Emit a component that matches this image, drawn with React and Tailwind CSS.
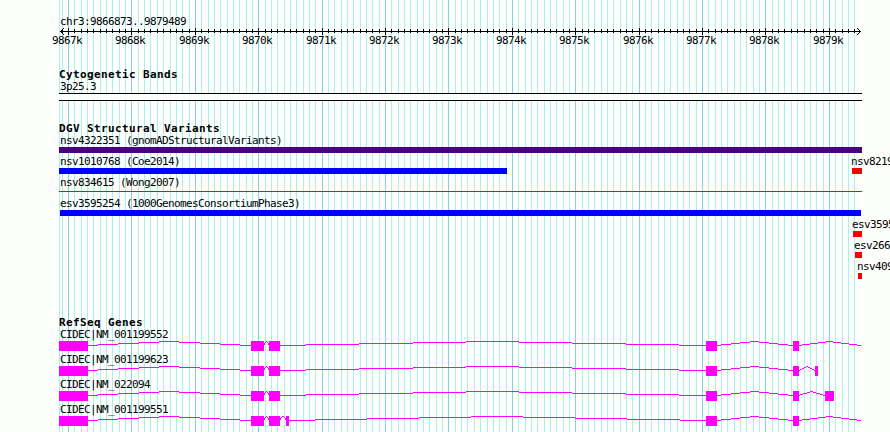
const START = 59;
const ORIGIN = 68.06;
const STEP = 6.34;

const gridLines = [];
for (let i = -1; i <= 124; i++) {
  gridLines.push({ x: Math.round(ORIGIN + i * STEP), major: i % 10 === 0 });
}

const kiloLabels = Array.from({ length: 13 }, (_, i) => ({
  x: Math.round(ORIGIN + i * 10 * STEP) - 16,
  text: `${9867 + i}k`,
}));

// x of the exons and the introns between them, in pixels
const genes = [
  {
    name: "CIDEC|NM_001199552",
    exons: [[59, 29], [251, 13], [269, 11], [706, 11], [793, 6]],
    introns: [[88, 251], [264, 269], [280, 706], [717, 793], [799, 861]],
  },
  {
    name: "CIDEC|NM_001199623",
    exons: [[59, 29], [251, 13], [269, 11], [706, 11], [793, 6], [815, 3]],
    introns: [[88, 251], [264, 269], [280, 706], [717, 793], [799, 815]],
  },
  {
    name: "CIDEC|NM_022094",
    exons: [[59, 29], [251, 13], [269, 11], [706, 11], [793, 6], [825, 9]],
    introns: [[88, 251], [264, 269], [280, 706], [717, 793], [799, 825]],
  },
  {
    name: "CIDEC|NM_001199551",
    exons: [[59, 29], [251, 13], [269, 11], [286, 3], [706, 11], [793, 6]],
    introns: [[88, 251], [264, 269], [280, 286], [289, 706], [717, 793], [799, 861]],
  },
];

// stepped roof: five levels, one pixel apart
function intronPath([a, b]) {
  // the tiny introns are drawn as a small caret
  if (b - a < 8) {
    const w = b - a;
    return w === 5
      ? `M${a} 3h1v2h-1zM${a + 1} 2h1v1h-1zM${a + 2} 1h1v1h-1zM${a + 3} 2h1v1h-1zM${a + 4} 3h1v2h-1z`
      : `M${a} 3h1v2h-1zM${a + 1} 2h1v1h-1zM${a + 2} 1h2v1h-2zM${a + 4} 2h1v1h-1zM${a + 5} 3h1v2h-1z`;
  }
  const half = (b - a) / 2;
  let d = "";
  let from = a;
  const cuts = [0.125, 0.375, 0.625, 0.875, 1.125, 1.375, 1.625, 1.875, 2];
  cuts.forEach((c, i) => {
    const to = Math.floor(a + half * c + 0.1);
    const level = i <= 4 ? i : 8 - i;
    if (to > from) d += `M${from} ${5 - level}H${to}V${6 - level}H${from}Z`;
    from = to;
  });
  return d;
}

function Grid() {
  return (
    <svg className="absolute inset-0" width="890" height="432" shapeRendering="crispEdges">
      <rect x={START} width="1" height="432" fill="#afeeee" />
      {gridLines.map(({ x, major }) => (
        <rect key={x} x={x} width="1" height="432" fill={major ? "#87ceeb" : "#afeeee"} />
      ))}
    </svg>
  );
}

function Axis() {
  return (
    <svg className="block h-2 w-full" shapeRendering="crispEdges">
      <rect x="60" y="3" width="801" height="1" />
      {gridLines.map(({ x, major }) => (
        <rect key={x} x={x} y={major ? 0 : 1} width="1" height={major ? 7 : 4} />
      ))}
      <path d="M61 2h1v3h-1zM62 1h1v1h-1zM62 5h1v1h-1zM63 0h1v1h-1zM63 6h1v1h-1z" />
      <path d="M859 2h1v3h-1zM858 1h1v1h-1zM858 5h1v1h-1zM857 0h1v1h-1zM857 6h1v1h-1z" />
    </svg>
  );
}

function Title({ children }) {
  return (
    <h2 className="h-3 pl-[59px] text-[11px] leading-[14px] font-bold tracking-[0.378px] whitespace-pre">
      {children}
    </h2>
  );
}

function Label({ children, className = "pl-[60px]" }) {
  return <p className={"h-3 leading-[14px] whitespace-pre " + className}>{children}</p>;
}

function Variant({ label, bar, right, rightBar, rightClass }) {
  return (
    <div className="grid h-[21px] grid-cols-1 grid-rows-[12px_9px]">
      <div className="flex">
        {label && <Label>{label}</Label>}
        {right && <Label className={"absolute " + rightClass}>{right}</Label>}
      </div>
      <div className="flex">
        {bar && <div className={bar} />}
        {rightBar && <div className={rightBar} />}
      </div>
    </div>
  );
}

function Gene({ gene }) {
  return (
    <div className="h-[25px]">
      <Label>{gene.name}</Label>
      <svg className="block h-[13px] w-full" shapeRendering="crispEdges" fill="#ff00ff">
        {gene.introns.map((intron) => (
          <path key={intron[0]} d={intronPath(intron)} />
        ))}
        {gene.exons.map(([x, width]) => (
          <rect key={x} x={x} y="1" width={width} height="10" />
        ))}
      </svg>
    </div>
  );
}

function App() {
  return (
    <main className="relative h-[432px] w-[890px] overflow-hidden bg-[#fdfffc] font-['DejaVu_Sans_Mono',monospace] text-[11px] tracking-[-0.622px] text-black">
      <Grid />
      <div className="relative pt-[15px]">
        <Label>chr3:9866873..9879489</Label>
        <div className="mt-px">
          <Axis />
        </div>
        <div className="-mt-px flex h-3 pl-[52px]">
          {kiloLabels.map(({ x, text }, i) => (
            <span
              key={text}
              className="shrink-0 leading-3"
              style={{ width: i < 12 ? kiloLabels[i + 1].x - x : 32 }}
            >
              {text}
            </span>
          ))}
        </div>

        <section className="mt-[21px]">
          <Title>Cytogenetic Bands</Title>
          <Label>3p25.3</Label>
          <div className="mt-px ml-[59px] h-2 w-[803px] border-y border-black bg-[#fdfffc]" />
        </section>

        <section className="mt-[21px]">
          <Title>DGV Structural Variants</Title>
          <Variant
            label="nsv4322351 (gnomADStructuralVariants)"
            bar="mt-px ml-[59px] h-1.5 w-[803px] bg-[#4b0082]"
          />
          <Variant
            label="nsv1010768 (Coe2014)"
            bar="mt-px ml-[59px] h-1.5 w-[448px] bg-[#0000ff]"
            right="nsv8219"
            rightClass="left-[851px]"
            rightBar="mt-px ml-[345px] h-1.5 w-2.5 bg-[#ff0000]"
          />
          <Variant
            label="nsv834615 (Wong2007)"
            bar="mt-[3px] ml-[59px] h-px w-[803px] bg-[#ff0000]"
          />
          <Variant
            label="esv3595254 (1000GenomesConsortiumPhase3)"
            bar="mt-px ml-[60px] h-1.5 w-[801px] bg-[#0000ff]"
          />
          <Variant
            right="esv3595"
            rightClass="left-[852px]"
            rightBar="mt-px ml-[853px] h-1.5 w-[9px] bg-[#ff0000]"
          />
          <Variant
            right="esv266"
            rightClass="left-[854px]"
            rightBar="mt-px ml-[855px] h-1.5 w-[7px] bg-[#ff0000]"
          />
          <Variant
            right="nsv409"
            rightClass="left-[857px]"
            rightBar="mt-px ml-[858px] h-1.5 w-1 bg-[#ff0000]"
          />
        </section>

        <section className="mt-[35px]">
          <Title>RefSeq Genes</Title>
          {genes.map((gene) => (
            <Gene key={gene.name} gene={gene} />
          ))}
        </section>
      </div>
    </main>
  );
}

export default App;
